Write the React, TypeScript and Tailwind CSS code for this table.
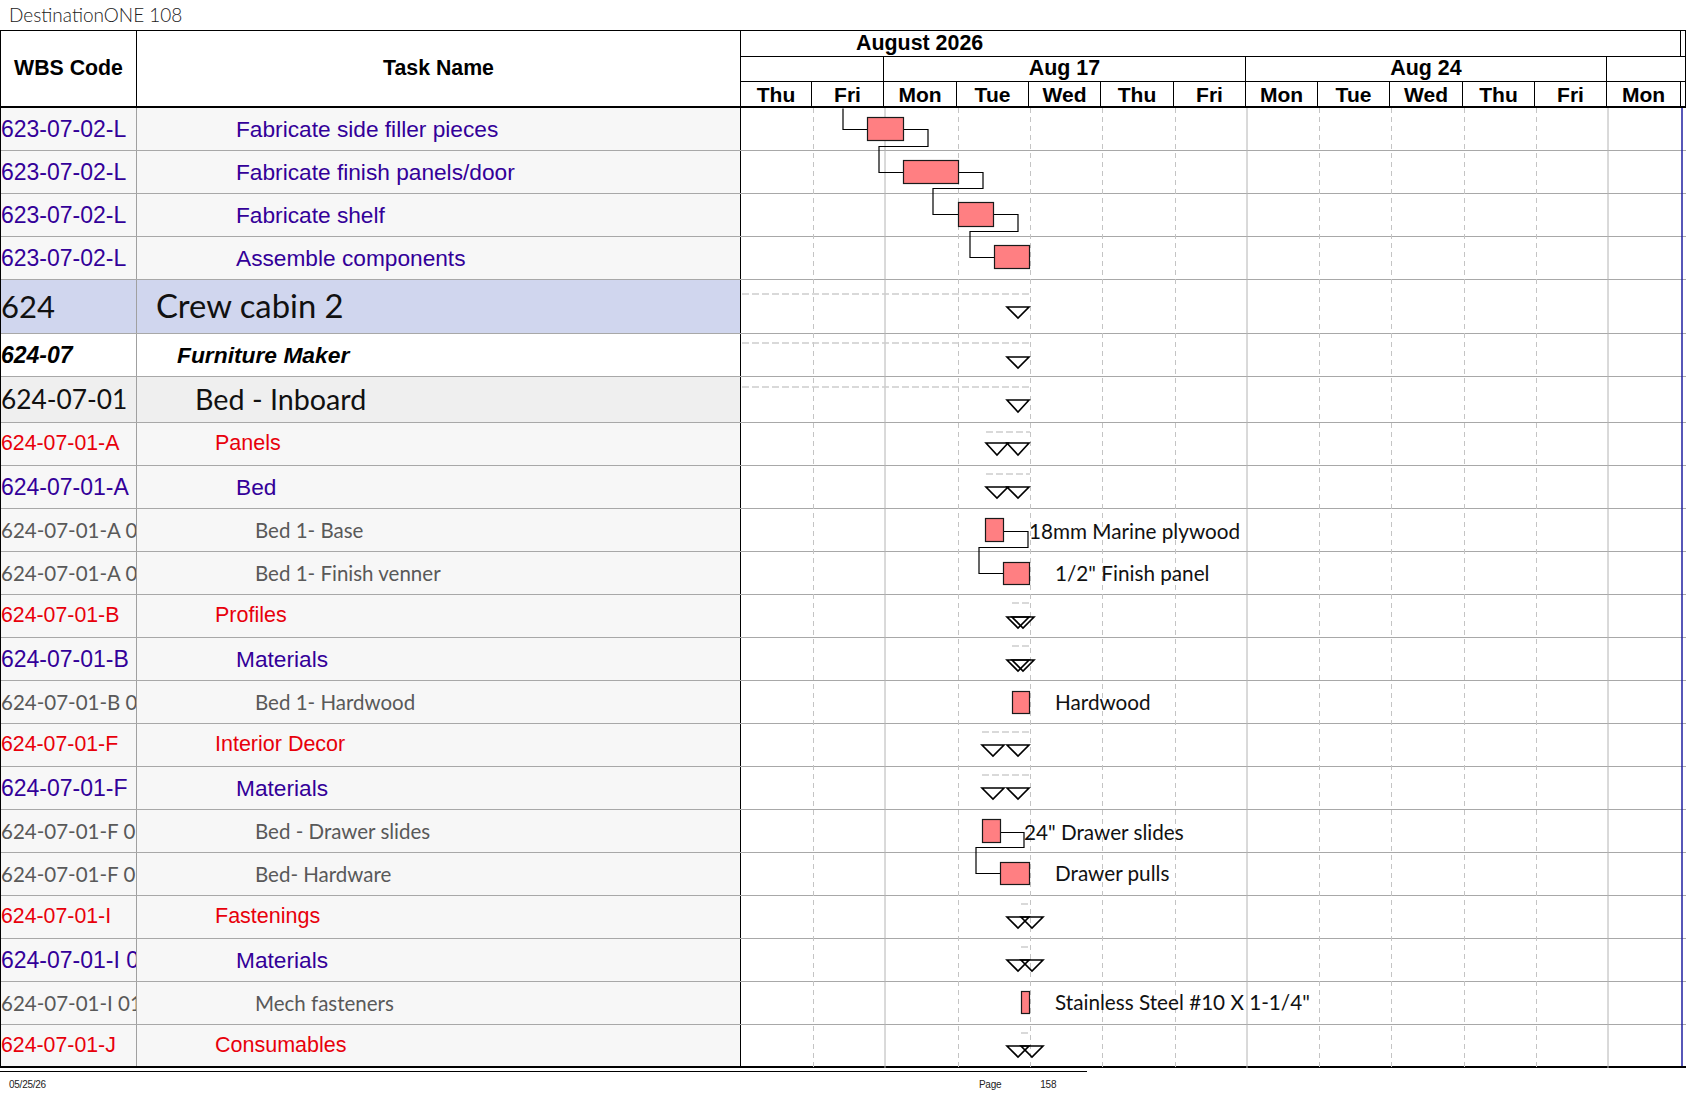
import React from "react";

type Kind = "purple" | "red" | "gray" | "crew" | "furn" | "inboard";

interface Row {
  h: number;
  wbs: string;
  task: string;
  kind: Kind;
}

const rows: Row[] = [
  { h: 43, wbs: "623-07-02-L", task: "Fabricate side filler pieces", kind: "purple" },
  { h: 43, wbs: "623-07-02-L", task: "Fabricate finish panels/door", kind: "purple" },
  { h: 43, wbs: "623-07-02-L", task: "Fabricate shelf", kind: "purple" },
  { h: 43, wbs: "623-07-02-L", task: "Assemble components", kind: "purple" },
  { h: 54, wbs: "624", task: "Crew cabin 2", kind: "crew" },
  { h: 43, wbs: "624-07", task: "Furniture Maker", kind: "furn" },
  { h: 46, wbs: "624-07-01", task: "Bed - Inboard", kind: "inboard" },
  { h: 43, wbs: "624-07-01-A", task: "Panels", kind: "red" },
  { h: 43, wbs: "624-07-01-A", task: "Bed", kind: "purple" },
  { h: 43, wbs: "624-07-01-A 01", task: "Bed 1- Base", kind: "gray" },
  { h: 43, wbs: "624-07-01-A 02", task: "Bed 1- Finish venner", kind: "gray" },
  { h: 43, wbs: "624-07-01-B", task: "Profiles", kind: "red" },
  { h: 43, wbs: "624-07-01-B", task: "Materials", kind: "purple" },
  { h: 43, wbs: "624-07-01-B 01", task: "Bed 1- Hardwood", kind: "gray" },
  { h: 43, wbs: "624-07-01-F", task: "Interior Decor", kind: "red" },
  { h: 43, wbs: "624-07-01-F", task: "Materials", kind: "purple" },
  { h: 43, wbs: "624-07-01-F 01", task: "Bed - Drawer slides", kind: "gray" },
  { h: 43, wbs: "624-07-01-F 02", task: "Bed- Hardware", kind: "gray" },
  { h: 43, wbs: "624-07-01-I", task: "Fastenings", kind: "red" },
  { h: 43, wbs: "624-07-01-I 01", task: "Materials", kind: "purple" },
  { h: 43, wbs: "624-07-01-I 01", task: "Mech fasteners", kind: "gray" },
  { h: 43, wbs: "624-07-01-J", task: "Consumables", kind: "red" },
];

const arial = "font-['Liberation_Sans',Arial,sans-serif]";
const cal = "font-['Lato','Open_Sans',sans-serif]";

// per kind: row background, wbs text, task text (with its indent)
const styles: Record<Kind, { bg: string; wbs: string; task: string }> = {
  purple: {
    bg: "bg-[#f7f7f7]",
    wbs: `${arial} text-[23px] text-[#330099]`,
    task: `${arial} text-[22.7px] text-[#330099] pl-[99px]`,
  },
  red: {
    bg: "bg-[#f7f7f7]",
    wbs: `${arial} text-[21.3px] text-[#e8000b]`,
    task: `${arial} text-[21.5px] text-[#e8000b] pl-[78px]`,
  },
  gray: {
    bg: "bg-[#f7f7f7]",
    wbs: `${cal} text-[20.5px] text-[#595959]`,
    task: `${cal} text-[20.5px] text-[#595959] pl-[118px]`,
  },
  crew: {
    bg: "bg-[#d0d6ee]",
    wbs: `${cal} text-[31px] text-[#111]`,
    task: `${cal} text-[32.8px] text-[#111] pl-[19px]`,
  },
  furn: {
    bg: "bg-white",
    wbs: `${arial} text-[23px] font-bold italic text-black`,
    task: `${arial} text-[22.8px] font-bold italic text-black pl-[40px]`,
  },
  inboard: {
    bg: "bg-[#efefef]",
    wbs: `${cal} text-[26.3px] text-[#111]`,
    task: `${cal} text-[28.7px] text-[#111] pl-[58px]`,
  },
};

const days = ["Thu", "Fri", "Mon", "Tue", "Wed", "Thu", "Fri", "Mon", "Tue", "Wed", "Thu", "Fri", "Mon"];
const dayW = [71, 72, 73, 72, 72, 73, 72, 72, 72, 73, 72, 72, 74];

// chart coordinates are page coordinates, shifted into the svg
const GX = 741;
const GY = 108;
const X = (x: number) => x - GX;
const Y = (y: number) => y - GY;

const bounds = [812, 884, 957, 1029, 1101, 1174, 1246, 1318, 1390, 1463, 1535, 1607];
const mondays = [884, 1246, 1607];

const bars: [number, number, number, number][] = [
  [866, 902, 117, 140],
  [902, 957, 160, 183],
  [957, 992, 202, 226],
  [993, 1028, 245, 268],
  [984, 1002, 518, 541],
  [1002, 1028, 562, 584],
  [1011, 1028, 691, 713],
  [981, 999, 819, 842],
  [999, 1028, 862, 884],
  [1020, 1028, 991, 1013],
];

const links: [number, number][][] = [
  [[842, 108], [842, 129], [866, 129]],
  [[902, 129], [927, 129], [927, 146], [878, 146], [878, 172], [902, 172]],
  [[957, 172], [982, 172], [982, 188], [932, 188], [932, 214], [957, 214]],
  [[992, 214], [1017, 214], [1017, 231], [969, 231], [969, 257], [993, 257]],
  [[1002, 531], [1027, 531], [1027, 547], [978, 547], [978, 573], [1002, 573]],
  [[999, 832], [1023, 832], [1023, 847], [975, 847], [975, 873], [999, 873]],
];

interface Summary {
  dash: number;
  from: number;
  top: number;
  bot: number;
  tris: [number, number][];
}

const summaries: Summary[] = [
  { dash: 294, from: 741, top: 307, bot: 318, tris: [[1006, 1028]] },
  { dash: 343, from: 741, top: 357, bot: 368, tris: [[1006, 1028]] },
  { dash: 387, from: 741, top: 400, bot: 412, tris: [[1006, 1028]] },
  { dash: 432, from: 985, top: 443, bot: 455, tris: [[985, 1007], [1006, 1028]] },
  { dash: 474, from: 985, top: 487, bot: 498, tris: [[985, 1007], [1006, 1028]] },
  { dash: 603, from: 1011, top: 617, bot: 628, tris: [[1006, 1028], [1011, 1033]] },
  { dash: 646, from: 1011, top: 660, bot: 671, tris: [[1006, 1028], [1011, 1033]] },
  { dash: 732, from: 981, top: 745, bot: 756, tris: [[981, 1003], [1006, 1028]] },
  { dash: 775, from: 981, top: 788, bot: 799, tris: [[981, 1003], [1006, 1028]] },
  { dash: 904, from: 1020, top: 917, bot: 928, tris: [[1006, 1028], [1020, 1042]] },
  { dash: 947, from: 1020, top: 960, bot: 971, tris: [[1006, 1028], [1020, 1042]] },
  { dash: 1033, from: 1020, top: 1046, bot: 1057, tris: [[1006, 1028], [1020, 1042]] },
];

const labels: [number, number, string][] = [
  [1028, 531, "18mm Marine plywood"],
  [1054, 573, '1/2" Finish panel'],
  [1054, 702, "Hardwood"],
  [1023, 832, '24" Drawer slides'],
  [1054, 873, "Drawer pulls"],
  [1054, 1002, 'Stainless Steel #10 X 1-1/4"'],
];

function GanttChart() {
  return (
    <svg
      className="absolute left-[741px] top-0 pointer-events-none"
      width={946}
      height={960}
      viewBox="0 0 946 960"
    >
      {bounds.map((b) =>
        mondays.includes(b) ? (
          <line key={b} x1={X(b)} x2={X(b)} y1={0} y2={960} stroke="#b4b4b4" strokeWidth={1} />
        ) : (
          <line
            key={b}
            x1={X(b) + 0.5}
            x2={X(b) + 0.5}
            y1={0}
            y2={960}
            stroke="#c4c4c4"
            strokeWidth={1}
            strokeDasharray="5 4"
          />
        )
      )}
      <line x1={X(1681)} x2={X(1681)} y1={0} y2={958} stroke="#1f1fa0" strokeWidth={1.5} />

      {summaries.map((s, i) => (
        <line
          key={`d${i}`}
          x1={X(s.from)}
          x2={X(1029)}
          y1={Y(s.dash)}
          y2={Y(s.dash)}
          stroke="#cdcdcd"
          strokeWidth={1.5}
          strokeDasharray="7 3"
        />
      ))}

      {links.map((pts, i) => (
        <polyline
          key={`l${i}`}
          points={pts.map(([x, y]) => `${X(x)},${Y(y) + 0.5}`).join(" ")}
          fill="none"
          stroke="#000"
          strokeWidth={1.2}
        />
      ))}

      {bars.map(([x1, x2, y1, y2], i) => (
        <rect
          key={`b${i}`}
          x={X(x1) + 0.5}
          y={Y(y1) + 0.5}
          width={x2 - x1}
          height={y2 - y1}
          fill="#ff7f82"
          stroke="#1a1a1a"
          strokeWidth={1.2}
        />
      ))}

      {summaries.map((s, i) =>
        s.tris.map(([a, b], j) => (
          <path
            key={`t${i}-${j}`}
            d={`M${X(a)} ${Y(s.top)} L${X(b)} ${Y(s.top)} L${(X(a) + X(b)) / 2} ${Y(s.bot)} Z`}
            fill="none"
            stroke="#000"
            strokeWidth={1.6}
            strokeLinejoin="miter"
          />
        ))
      )}

      {labels.map(([x, y, t]) => (
        <text
          key={t}
          x={X(x)}
          y={Y(y)}
          dominantBaseline="central"
          fontFamily="Lato, 'Open Sans', sans-serif"
          fontSize={20.7}
          fill="#111"
        >
          {t}
        </text>
      ))}
    </svg>
  );
}

function Header() {
  return (
    <div
      className={`flex h-[78px] w-[1686px] border-t border-b-2 border-l border-black ${arial} font-bold text-black leading-none`}
    >
      <div className="w-[136px] border-r border-black flex items-center justify-center text-[21.3px]">
        WBS Code
      </div>
      <div className="w-[604px] border-r border-black flex items-center justify-center text-[21.3px]">
        Task Name
      </div>
      <div className="flex-1 min-h-0 flex flex-col">
        <div className="h-[26px] shrink-0 flex border-b border-black">
          <div className="w-[940px] border-r border-black pl-[115px] flex items-center text-[21.4px]">
            August 2026
          </div>
          <div className="flex-1 border-r border-black" />
        </div>
        <div className="h-[25px] shrink-0 flex border-b border-black text-[21.4px]">
          <div className="w-[143px] border-r border-black" />
          <div className="w-[362px] border-r border-black flex items-center justify-center">Aug 17</div>
          <div className="w-[361px] border-r border-black flex items-center justify-center">Aug 24</div>
          <div className="flex-1 border-r border-black" />
        </div>
        <div className="h-[24px] shrink-0 flex text-[21px]">
          {days.map((d, i) => (
            <div
              key={i}
              className="border-r border-black flex items-center justify-center"
              style={{ width: dayW[i] }}
            >
              {d}
            </div>
          ))}
          <div className="flex-1 border-r border-black" />
        </div>
      </div>
    </div>
  );
}

export default function App() {
  return (
    <div className="w-[1687px] h-[1097px] bg-white overflow-hidden">
      <div className={`h-[30px] pl-[9px] flex items-center ${cal} font-light text-[19px] text-[#222]`}>
        DestinationONE 108
      </div>
      <Header />
      <div className="relative w-[1686px] border-l border-black">
        {rows.map((r, i) => {
          const s = styles[r.kind];
          const last = i === rows.length - 1;
          return (
            <div
              key={i}
              className={`flex leading-none ${last ? "border-b-2 border-black" : "border-b border-[#a8a8a8]"}`}
              style={{ height: r.h }}
            >
              <div
                className={`w-[136px] shrink-0 border-r border-[#a0a0a0] ${s.bg} flex items-center overflow-hidden whitespace-nowrap ${s.wbs}`}
              >
                {r.wbs}
              </div>
              <div
                className={`w-[604px] shrink-0 border-r border-black ${s.bg} flex items-center whitespace-nowrap ${s.task}`}
              >
                {r.task}
              </div>
              <div className="flex-1 bg-white" />
            </div>
          );
        })}
        <GanttChart />
      </div>
      <div className="mt-[3px] h-px w-[1087px] bg-black" />
      <div className={`h-[24px] ${arial} text-[10px] tracking-tight text-[#222]`}>
        <div className="flex items-center h-full pl-[9px]">
          <span>05/25/26</span>
          <span className="ml-[933px]">Page</span>
          <span className="ml-[39px]">158</span>
        </div>
      </div>
    </div>
  );
}
